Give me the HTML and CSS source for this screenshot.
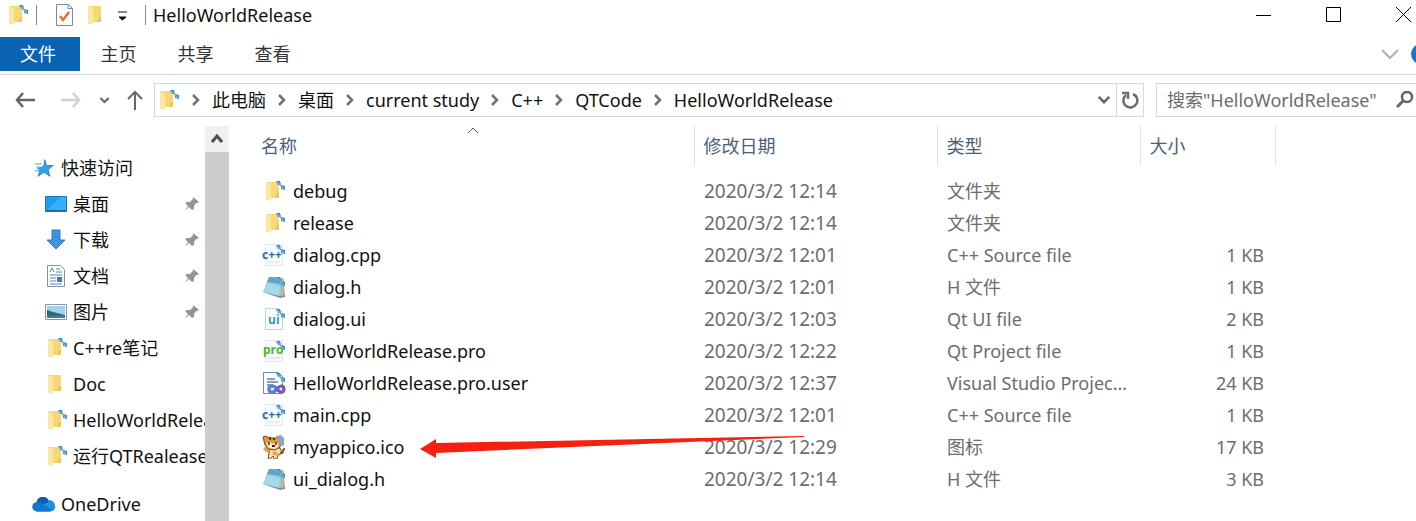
FILE: index.html
```html
<!DOCTYPE html>
<html lang="zh-CN">
<head>
    <meta charset="UTF-8">
    <meta name="viewport" content="width=device-width, initial-scale=1.0">
    <title>HelloWorldRelease</title>
    <link rel="stylesheet" href="styles.css">
</head>
<body>

<!-- Shared icons -->
<svg class="icon-defs" aria-hidden="true">
    <symbol id="sync" viewBox="0 0 24 24">
        <path d="M14 2l4 0 1 4-3 0z" fill="#3b8cc8"/>
        <path d="M19 6l4 1 0 4-4-1z" fill="#3f88bf"/>
        <path d="M15 3l7 7" stroke="#74b4de" stroke-width="1.500"/>
    </symbol>
    <symbol id="folder" viewBox="0 0 24 24">
        <path d="M4 3h13v16H8L4 21z" fill="#f8d775"/>
        <path d="M4 3l5 2v17l-5-2z" fill="#fbe6a4"/>
        <path d="M15 14h2v5h-4z" fill="#eec55b"/>
    </symbol>
    <symbol id="folder-sync" viewBox="0 0 24 24">
        <use href="#folder"/>
        <use href="#sync"/>
    </symbol>
    <symbol id="page" viewBox="0 0 24 24">
        <path d="M3.500 1.500h13l4 4v17h-17z" fill="#fbfcfd" stroke="#c9d2da"/>
    </symbol>
    <symbol id="header-file" viewBox="0 0 24 24">
        <path d="M19 3l3 1 1 17-5 1z" fill="#b9b3a6"/>
        <path d="M7 2l13 1-2 18L1 17z" fill="#8fcbe1"/>
        <path d="M7 2l13 1-1 6L5 7z" fill="#5da3c3"/>
        <path d="M5 8l13 3-1 10L1 17z" fill="#a5d8e8"/>
        <path d="M1 17l17 4 5-1v2l-5 1z" fill="#7f929c"/>
        <use href="#sync"/>
    </symbol>
    <symbol id="vs-file" viewBox="0 0 24 24">
        <path d="M1.500 1.500h15l4 4v17h-19z" fill="#fff" stroke="#6d8db5"/>
        <path d="M5 8h8M5 11h11M5 14h6" stroke="#5b80ad" stroke-width="1.500"/>
        <path d="M15 18c3-4 7-4 7 0s-4 4-7 0-8-4-8 0 5 4 8 0z" fill="none" stroke="#7e55bd" stroke-width="3"/>
        <path d="M14 17c-3-3-7-3-7 1s4 4 7 1" fill="none" stroke="#4d8bd8" stroke-width="3"/>
        <use href="#sync"/>
    </symbol>
    <symbol id="tiger" viewBox="0 0 24 24">
        <path d="M8 13h10l2 5-4 2-1 4h-3l-1-3-3 3H6l1-6z" fill="#f9dc9f" stroke="#76502e"/>
        <path d="M18 18c5 1 1-4 5-4" fill="none" stroke="#7a5130" stroke-width="2"/>
        <path d="M1 2l3-1 3 2h7l4-1 1 4-1 6-5 3-7-1-3-4z" fill="#e9963b" stroke="#7a4a22"/>
        <path d="M4 8l4-1 3 2 4-2 2 4-4 3-6-1z" fill="#fdf0cf"/>
        <path d="M7 7v3M14 7v3M8 2v3M12 3v2" stroke="#43260f" stroke-width="1.500"/>
        <path d="M10 11h3" stroke="#43260f" stroke-width="2"/>
        <path d="M2 13l5 4M11 18l4 1" stroke="#e0a24f" stroke-width="3"/>
        <path d="M14 1l5-1 3 3v8l-4-1-1-5z" fill="#7fabc9"/>
    </symbol>
    <symbol id="star" viewBox="0 0 24 24">
        <path d="M13 2l2 7h8l-6 5 2 8-7-5-7 5 2-8-3-2 5-1 3-2z" fill="#31a1e8" stroke="#2582c3"/>
        <path d="M1 7h8M3 11h4M1 15h5" stroke="#63bdf0" stroke-width="1.500"/>
    </symbol>
    <symbol id="desktop" viewBox="0 0 24 24">
        <path d="M1.500 4.500h21v15h-21z" fill="#1e9df1" stroke="#1878bd"/>
        <path d="M2 19L17 5h5v14z" fill="#3aaef8"/>
        <path d="M2 18.500h20" stroke="#1566a3"/>
    </symbol>
    <symbol id="download" viewBox="0 0 24 24">
        <path d="M8 2h8v10h5l-9 9-9-9h5z" fill="#3e92e0" stroke="#2f78c2"/>
    </symbol>
    <symbol id="document" viewBox="0 0 24 24">
        <path d="M3.500 1.500h13l4 4v17h-17z" fill="#fff" stroke="#8595a3"/>
        <path d="M6 8l2-4 2 4M12 5h4M12 8h6M6 11h12M6 14h6M6 17h6M6 20h12" fill="none" stroke="#4c87b5"/>
        <path d="M13 13h5v5h-5z" fill="#3f7fae"/>
    </symbol>
    <symbol id="picture" viewBox="0 0 24 24">
        <path d="M1.500 4.500h21v15h-21z" fill="#fff" stroke="#8a97a3"/>
        <path d="M3 6h18v12H3z" fill="#9fd3f2"/>
        <path d="M3 10l6 2 12 3v3H3z" fill="#2f6b62"/>
        <path d="M3 16l18-1v3H3z" fill="#3d7cb0"/>
    </symbol>
    <symbol id="cloud" viewBox="0 0 26 24">
        <path d="M6 20a5 5 0 0 1-1-10 7 7 0 0 1 13-2 6 6 0 0 1 7 6 5 5 0 0 1-5 6z" fill="#1f8fe0"/>
        <path d="M5 10a7 7 0 0 1 13-2l-1 2-7 3z" fill="#0b5cb0"/>
        <path d="M5 10c4-1 6 2 16 8l-1 2H6a5 5 0 0 1-1-10z" fill="#1377ce"/>
    </symbol>
    <symbol id="pin" viewBox="0 0 16 16">
        <path d="M9 1l6 5-2 1-1 0-2 3 0 3-2 1-3-3-4 4 3-5-3-3 2-1h3l3-3z" fill="#8b979f"/>
    </symbol>
    <symbol id="chevron-right" viewBox="0 0 8 12">
        <path d="M1 1l5 5-5 5" fill="none" stroke="#707070" stroke-width="2.500"/>
    </symbol>
    <symbol id="chevron-down" viewBox="0 0 16 10">
        <path d="M2 2l6 6 6-6" fill="none" stroke="currentColor" stroke-width="3"/>
    </symbol>
    <symbol id="arrow-left" viewBox="0 0 20 16">
        <path d="M8 1L2 8l6 7M2 8h18" fill="none" stroke="currentColor" stroke-width="2.500"/>
    </symbol>
</svg>

<header class="title-bar">
    <svg class="icon"><use href="#folder-sync"/></svg>
    <span class="divider"></span>
    <button class="quick-button" aria-label="属性">
        <svg class="icon" viewBox="0 0 24 24">
            <path d="M4.500 1.500h12l4 4v17h-16z" fill="#fafbfd" stroke="#7d8a9c"/>
            <path d="M16 1.500v4h4" fill="none" stroke="#7d8a9c"/>
            <path d="M8 13l3 4 6-8" fill="none" stroke="#e0713a" stroke-width="2.500"/>
        </svg>
    </button>
    <button class="quick-button" aria-label="新建文件夹"><svg class="icon"><use href="#folder"/></svg></button>
    <button class="quick-button menu-button" aria-label="自定义快速访问工具栏">
        <svg width="10" height="12" viewBox="0 0 10 12"><path d="M0 3h9M1 8h7L4.500 11z" fill="#111" stroke="#111"/></svg>
    </button>
    <span class="divider"></span>
    <h1 class="title">HelloWorldRelease</h1>
    <div class="window-buttons">
        <button aria-label="最小化"><svg width="16" height="16"><path d="M0 8.500h15" stroke="#000"/></svg></button>
        <button aria-label="最大化"><svg width="16" height="16"><path d="M.5.5h14v14H.5z" fill="none" stroke="#000"/></svg></button>
        <button aria-label="关闭"><svg width="16" height="16"><path d="M0 0l15 15M15 0L0 15" stroke="#000"/></svg></button>
    </div>
</header>

<nav class="ribbon">
    <button class="tab active">文件</button>
    <button class="tab">主页</button>
    <button class="tab">共享</button>
    <button class="tab">查看</button>
    <button class="expand" aria-label="展开功能区"><svg width="18" height="12" viewBox="0 0 18 12"><path d="M1 2l8 8 8-8" fill="none" stroke="#b0b0b0" stroke-width="2"/></svg></button>
    <button class="help" aria-label="帮助"></button>
</nav>

<div class="address-row">
    <button class="back" aria-label="后退"><svg width="20" height="16"><use href="#arrow-left"/></svg></button>
    <button class="forward" aria-label="前进"><svg width="20" height="16"><use href="#arrow-left"/></svg></button>
    <button class="history" aria-label="最近浏览的位置"><svg width="11" height="8"><use href="#chevron-down"/></svg></button>
    <button class="up" aria-label="上移"><svg width="16" height="20" viewBox="0 0 16 20"><path d="M1 9l7-7 7 7M8 2v18" fill="none" stroke="currentColor" stroke-width="2"/></svg></button>
    <div class="address-box">
        <svg class="icon"><use href="#folder-sync"/></svg>
        <svg class="crumb-arrow"><use href="#chevron-right"/></svg>
        <a href="#">此电脑</a>
        <svg class="crumb-arrow"><use href="#chevron-right"/></svg>
        <a href="#">桌面</a>
        <svg class="crumb-arrow"><use href="#chevron-right"/></svg>
        <a href="#">current study</a>
        <svg class="crumb-arrow"><use href="#chevron-right"/></svg>
        <a href="#">C++</a>
        <svg class="crumb-arrow"><use href="#chevron-right"/></svg>
        <a href="#">QTCode</a>
        <svg class="crumb-arrow"><use href="#chevron-right"/></svg>
        <a href="#">HelloWorldRelease</a>
        <button class="address-drop" aria-label="以前的位置"><svg width="14" height="9"><use href="#chevron-down"/></svg></button>
        <button class="refresh" aria-label="刷新">
            <svg width="18" height="18" viewBox="0 0 18 18"><path d="M12 3a7 7 0 1 1-7 1" fill="none" stroke="#6d6d6d" stroke-width="2.500"/><path d="M1 2h6v6" fill="none" stroke="#6d6d6d" stroke-width="2.500"/></svg>
        </button>
    </div>
    <div class="search-box">
        <input type="text" aria-label="搜索" placeholder='搜索"HelloWorldRelease"'>
        <svg width="18" height="18" viewBox="0 0 18 18"><circle cx="11" cy="6" r="5" fill="none" stroke="#666" stroke-width="2.500"/><path d="M7 10l-6 6" stroke="#666" stroke-width="3"/></svg>
    </div>
</div>

<div class="content">
    <aside class="sidebar">
        <ul class="nav-list">
            <li class="root"><a href="#"><svg class="icon small"><use href="#star"/></svg>快速访问</a></li>
            <li><a href="#"><svg class="icon"><use href="#desktop"/></svg>桌面</a><svg class="pin"><use href="#pin"/></svg></li>
            <li><a href="#"><svg class="icon"><use href="#download"/></svg>下载</a><svg class="pin"><use href="#pin"/></svg></li>
            <li><a href="#"><svg class="icon"><use href="#document"/></svg>文档</a><svg class="pin"><use href="#pin"/></svg></li>
            <li><a href="#"><svg class="icon"><use href="#picture"/></svg>图片</a><svg class="pin"><use href="#pin"/></svg></li>
            <li><a href="#"><svg class="icon"><use href="#folder-sync"/></svg>C++re笔记</a></li>
            <li><a href="#"><svg class="icon"><use href="#folder"/></svg>Doc</a></li>
            <li><a href="#"><svg class="icon"><use href="#folder-sync"/></svg>HelloWorldRelease</a></li>
            <li><a href="#"><svg class="icon"><use href="#folder-sync"/></svg>运行QTRealease</a></li>
            <li class="root cloud"><a href="#"><svg class="icon"><use href="#cloud"/></svg>OneDrive</a></li>
        </ul>
        <div class="scrollbar">
            <button class="scroll-up" aria-label="向上滚动"><svg width="12" height="10" viewBox="0 0 12 10"><path d="M1 8l5-6 5 6" fill="none" stroke="#505050" stroke-width="3"/></svg></button>
        </div>
    </aside>

    <main class="files">
        <table>
            <colgroup>
                <col class="col-name">
                <col class="col-date">
                <col class="col-type">
                <col class="col-size">
                <col>
            </colgroup>
            <thead>
                <tr>
                    <th>名称<svg class="sort" width="12" height="7"><path d="M1 6l5-5 5 5" fill="none" stroke="#555"/></svg></th>
                    <th>修改日期</th>
                    <th>类型</th>
                    <th>大小</th>
                    <th></th>
                </tr>
            </thead>
            <tbody>
                <tr><td><span class="file"><svg class="icon"><use href="#folder-sync"/></svg>debug</span></td><td class="date">2020/3/2 12:14</td><td>文件夹</td><td></td></tr>
                <tr><td><span class="file"><svg class="icon"><use href="#folder-sync"/></svg>release</span></td><td class="date">2020/3/2 12:14</td><td>文件夹</td><td></td></tr>
                <tr><td><span class="file"><svg class="icon" viewBox="0 0 24 24"><path d="M3.500 1.500h17v21h-17z" fill="#f8fafc" stroke="#e2eaf0"/><path d="M5 19h13" stroke="#d5dfe8"/><use href="#sync"/><text x="0" y="16" class="glyph glyph-cpp">c++</text></svg>dialog.cpp</span></td><td class="date">2020/3/2 12:01</td><td>C++ Source file</td><td>1 KB</td></tr>
                <tr><td><span class="file"><svg class="icon"><use href="#header-file"/></svg>dialog.h</span></td><td class="date">2020/3/2 12:01</td><td>H 文件</td><td>1 KB</td></tr>
                <tr><td><span class="file"><svg class="icon" viewBox="0 0 24 24"><use href="#page"/><use href="#sync"/><text x="6" y="17" class="glyph glyph-ui">ui</text></svg>dialog.ui</span></td><td class="date">2020/3/2 12:03</td><td>Qt UI file</td><td>2 KB</td></tr>
                <tr><td><span class="file"><svg class="icon" viewBox="0 0 24 24"><path d="M3.500 1.500h17v21h-17z" fill="#faf9fb" stroke="#e8e5ec"/><path d="M5 19h13" stroke="#ddd0e2"/><use href="#sync"/><text x="1" y="15" class="glyph glyph-pro">pro</text></svg>HelloWorldRelease.pro</span></td><td class="date">2020/3/2 12:22</td><td>Qt Project file</td><td>1 KB</td></tr>
                <tr><td><span class="file"><svg class="icon"><use href="#vs-file"/></svg>HelloWorldRelease.pro.user</span></td><td class="date">2020/3/2 12:37</td><td>Visual Studio Projec...</td><td>24 KB</td></tr>
                <tr><td><span class="file"><svg class="icon" viewBox="0 0 24 24"><path d="M3.500 1.500h17v21h-17z" fill="#f8fafc" stroke="#e2eaf0"/><path d="M5 19h13" stroke="#d5dfe8"/><use href="#sync"/><text x="0" y="16" class="glyph glyph-cpp">c++</text></svg>main.cpp</span></td><td class="date">2020/3/2 12:01</td><td>C++ Source file</td><td>1 KB</td></tr>
                <tr><td><span class="file"><svg class="icon"><use href="#tiger"/></svg>myappico.ico</span></td><td class="date">2020/3/2 12:29</td><td>图标</td><td>17 KB</td></tr>
                <tr><td><span class="file"><svg class="icon"><use href="#header-file"/></svg>ui_dialog.h</span></td><td class="date">2020/3/2 12:14</td><td>H 文件</td><td>3 KB</td></tr>
            </tbody>
        </table>
        <!-- Arrow pointing at the icon file -->
        <svg class="marker" width="386" height="24" viewBox="0 0 386 24"><path d="M0 14L16 4v4L384 1v1L16 18v5z" fill="#f5200f"/></svg>
    </main>
</div>

</body>
</html>
```
FILE: styles.css
```css
* {
    box-sizing: border-box;
}

body {
    margin: 0;
    min-height: 100vh;
    display: flex;
    flex-direction: column;
    overflow: hidden;
    background-color: #ffffff;
    color: #111111;
    font-family: "Noto Sans", "Noto Sans CJK SC", sans-serif;
    font-size: 18px;
    line-height: 24px;
}

button {
    display: flex;
    align-items: center;
    justify-content: center;
    padding: 0;
    border: none;
    background: none;
    color: inherit;
    font: inherit;
}

a {
    color: inherit;
    text-decoration: none;
}

svg {
    flex-shrink: 0;
}

.icon-defs {
    display: none;
}

.icon {
    width: 24px;
    height: 24px;
}

/* Lettering inside the file icons */
.glyph {
    font-family: "Open Sans", sans-serif;
    font-size: 12px;
    font-weight: bold;
}

.glyph-cpp {
    fill: #2d6ca3;
}

.glyph-ui {
    fill: #2f9db5;
}

.glyph-pro {
    fill: #4eb52f;
}

/* Title bar */
.title-bar {
    display: flex;
    align-items: center;
    height: 37px;
    padding: 0 4px 8px 5px;
}

.divider {
    width: 1px;
    height: 20px;
    margin: 0 7px;
    background-color: #8a8a8a;
}

.quick-button {
    margin-left: 8px;
}

.menu-button {
    width: 30px;
    margin-left: 0;
}

.title {
    flex-grow: 1;
    margin: 0;
    font-size: 18px;
    font-weight: normal;
}

.window-buttons {
    display: flex;
    gap: 54px;
}

/* Ribbon tabs */
.ribbon {
    display: flex;
    align-items: center;
    height: 38px;
    padding-bottom: 3px;
    border-bottom: 1px solid #d4d4d4;
}

.tab {
    width: 77px;
    height: 34px;
    color: #333333;
}

.tab.active {
    width: 80px;
    padding-right: 4px;
    background-color: #0a63b0;
    color: #ffffff;
}

.expand {
    margin-left: auto;
}

.help {
    width: 20px;
    height: 20px;
    margin-left: 12px;
    margin-right: -15px;
    border-radius: 50%;
    background-color: #0f78cf;
}

/* Address row */
.address-row {
    display: flex;
    align-items: center;
    height: 51px;
    padding-bottom: 2px;
    padding-left: 15px;
    color: #666666;
}

.forward {
    margin-left: 26px;
    color: #d0d0d0;
}

.forward svg {
    transform: scaleX(-1);
}

.history {
    margin-left: 18px;
}

.up {
    margin: 0 11px 0 17px;
}

.address-box {
    display: flex;
    align-items: center;
    flex-grow: 1;
    height: 34px;
    padding-left: 1px;
    border: 1px solid #d9d9d9;
    color: #111111;
}

.crumb-arrow {
    width: 8px;
    height: 12px;
    margin: 0 12px;
}

.address-drop {
    width: 24px;
    margin-left: auto;
    color: #666666;
}

.refresh {
    width: 27px;
    height: 32px;
    border-left: 1px solid #d9d9d9;
}

.search-box {
    display: flex;
    align-items: center;
    width: 260px;
    height: 34px;
    margin-left: 12px;
    padding: 0 2px 0 10px;
    border: 1px solid #d9d9d9;
    border-right: none;
}

.search-box input {
    flex-grow: 1;
    min-width: 0;
    padding: 0;
    border: none;
    outline: none;
    background: none;
    font: inherit;
}

.search-box input::placeholder {
    color: #6d6d6d;
}

/* Navigation pane */
.content {
    display: flex;
    flex-grow: 1;
}

.sidebar {
    display: flex;
    width: 229px;
}

.nav-list {
    flex-grow: 1;
    min-width: 0;
    margin: 0;
    padding: 24px 0 0 44px;
    overflow: hidden;
    list-style: none;
    white-space: nowrap;
}

.nav-list li {
    display: flex;
    align-items: center;
    height: 36px;
}

.nav-list li a {
    display: flex;
    align-items: center;
    gap: 5px;
}

.nav-list .root {
    margin-left: -12px;
}

.nav-list .cloud {
    margin-top: 12px;
}

.icon.small {
    height: 20px;
}

.pin {
    width: 16px;
    height: 16px;
    margin-left: auto;
    margin-right: 5px;
}

.scrollbar {
    width: 24px;
    flex-shrink: 0;
    background-color: #cdcdcd;
}

.scroll-up {
    width: 24px;
    height: 26px;
    background-color: #f0f0f0;
}

/* File list */
.files {
    position: relative;
    flex-grow: 1;
    padding-left: 23px;
}

table {
    width: 100%;
    table-layout: fixed;
    border-collapse: collapse;
}

.col-name {
    width: 442px;
}

.col-date {
    width: 243px;
}

.col-type {
    width: 203px;
}

.col-size {
    width: 135px;
}

th {
    position: relative;
    height: 40px;
    padding: 0 9px;
    color: #4c607a;
    font-weight: normal;
    text-align: left;
}

th + th {
    border-left: 1px solid #e2e2e2;
}

.sort {
    position: absolute;
    top: 1px;
    left: 50%;
    transform: translateX(-50%);
}

tbody::before {
    content: "";
    display: block;
    height: 9px;
}

td {
    height: 32px;
    padding: 0 10px;
    color: #6d6d6d;
    white-space: nowrap;
}

td:last-child {
    padding-right: 11px;
    text-align: right;
}

.date {
    font-size: 19px;
}

.file {
    display: flex;
    align-items: center;
    gap: 7px;
    color: #111111;
}

.marker {
    position: absolute;
    top: 309px;
    left: 191px;
}
```
